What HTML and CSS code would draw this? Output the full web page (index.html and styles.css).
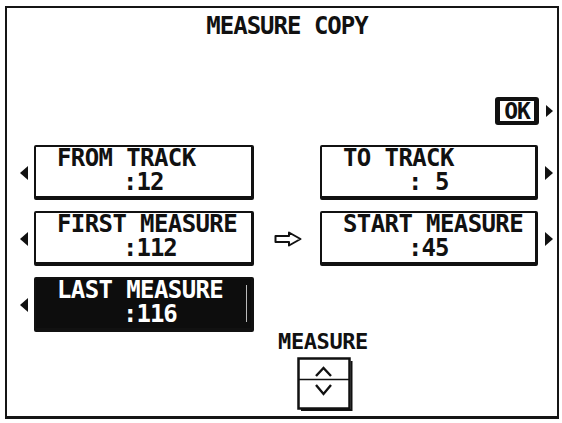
FILE: index.html
```html
<!DOCTYPE html>
<html>
<head>
<meta charset="utf-8">
<link rel="stylesheet" href="styles.css">
</head>
<body>
<div class="screen">
  <div class="title">MEASURE COPY</div>
  <div class="ok-row">
    <div class="ok">OK</div>
    <svg class="tri" width="7" height="12" viewBox="0 0 7 12"><polygon points="0,0 7,6 0,12" fill="#111"/></svg>
  </div>
  <div class="grid">
    <svg class="tri tri-l" width="8" height="14" viewBox="0 0 8 14"><polygon points="8,0 8,14 0,7" fill="#111"/></svg>
    <div class="box"><div class="lbl">FROM TRACK</div><div class="val">:12</div></div>
    <div class="mid"></div>
    <div class="box box-r"><div class="lbl">TO TRACK</div><div class="val">: 5</div></div>
    <svg class="tri tri-r" width="8" height="14" viewBox="0 0 8 14"><polygon points="0,0 8,7 0,14" fill="#111"/></svg>

    <svg class="tri tri-l" width="8" height="14" viewBox="0 0 8 14"><polygon points="8,0 8,14 0,7" fill="#111"/></svg>
    <div class="box"><div class="lbl">FIRST MEASURE</div><div class="val">:112</div></div>
    <div class="mid">
      <svg width="28" height="16" viewBox="0 0 28 16"><path d="M1.5 5 H15 V1.5 L26.5 8 L15 14.5 V11 H1.5 Z" fill="#fff" stroke="#111" stroke-width="2" stroke-linejoin="round"/></svg>
    </div>
    <div class="box box-r"><div class="lbl">START MEASURE</div><div class="val">:45</div></div>
    <svg class="tri tri-r" width="8" height="14" viewBox="0 0 8 14"><polygon points="0,0 8,7 0,14" fill="#111"/></svg>

    <svg class="tri tri-l" width="8" height="14" viewBox="0 0 8 14"><polygon points="8,0 8,14 0,7" fill="#111"/></svg>
    <div class="box box-sel"><div class="lbl">LAST MEASURE</div><div class="val">:116</div></div>
  </div>
  <div class="spin-area">
    <div class="spin-label">MEASURE</div>
    <svg class="spinner" width="56" height="54" viewBox="0 0 56 54">
      <rect x="1.5" y="1.5" width="51" height="50" fill="#fff" stroke="#111" stroke-width="2.5"/>
      <path d="M4 53 H54.5 V4" fill="none" stroke="#111" stroke-width="2"/>
      <line x1="2" y1="22.5" x2="52" y2="22.5" stroke="#111" stroke-width="1.3"/>
      <polyline points="19,19 26.5,11 34,19" fill="none" stroke="#111" stroke-width="2.4"/>
      <polyline points="19,28 26.5,37 34,28" fill="none" stroke="#111" stroke-width="2.4"/>
    </svg>
  </div>
</div>
</body>
</html>
```

FILE: styles.css
```css
html, body {
  margin: 0;
  padding: 0;
  background: #fff;
}

body {
  font-family: "DejaVu Sans Mono", "Liberation Mono", monospace;
  font-weight: bold;
  color: #111;
}

.screen {
  box-sizing: border-box;
  margin: 6px 0 0 5px;
  width: 554px;
  height: 413px;
  border: 2px solid #151515;
  border-bottom-width: 3px;
  display: flex;
  flex-direction: column;
}

.title {
  margin-top: 6px;
  font-size: 24px;
  line-height: 24px;
  letter-spacing: -1px;
  text-align: center;
  padding-left: 10px;
}

.ok-row {
  margin-top: 59px;
  display: flex;
  justify-content: flex-end;
  align-items: center;
  gap: 7px;
  padding-right: 4px;
}

.ok {
  box-sizing: border-box;
  width: 44px;
  height: 28px;
  border: 4px solid #111;
  border-left-width: 5px;
  border-right-width: 5px;
  border-radius: 3px;
  background: #fff;
  font-size: 23px;
  line-height: 20px;
  letter-spacing: -1px;
  text-align: center;
}

.grid {
  margin-top: 20px;
  padding-left: 13px;
  display: grid;
  grid-template-columns: 14px 220px 66px 218px 15px;
  grid-auto-rows: 55px;
  row-gap: 11px;
  align-items: center;
}

.tri-l { justify-self: start; }
.tri-r { justify-self: end; }

.mid {
  display: flex;
  justify-content: center;
  padding-left: 2px;
}

.box {
  box-sizing: border-box;
  height: 55px;
  border: 2px solid #111;
  border-right-width: 3px;
  border-bottom-width: 4px;
  border-radius: 2px;
  background: #fff;
  padding-left: 21px;
  position: relative;
}

.lbl {
  font-size: 24px;
  line-height: 23px;
  letter-spacing: -0.6px;
  white-space: nowrap;
}

.val {
  font-size: 24px;
  line-height: 24px;
  letter-spacing: -1px;
  padding-left: 66px;
  white-space: pre;
}

.box-r .val {
  padding-left: 65px;
}

.box-sel {
  background: #0d0d0d;
  color: #fff;
}

.box-sel::after {
  content: "";
  position: absolute;
  right: 4px;
  top: 6px;
  bottom: 6px;
  width: 1px;
  background: #bbb;
}

.spin-area {
  margin-left: 256px;
  width: 120px;
  display: flex;
  flex-direction: column;
  align-items: center;
}

.spin-label {
  font-size: 22px;
  line-height: 20px;
  letter-spacing: -0.4px;
}

.spinner {
  margin-top: 5px;
  margin-left: 4px;
}
```
